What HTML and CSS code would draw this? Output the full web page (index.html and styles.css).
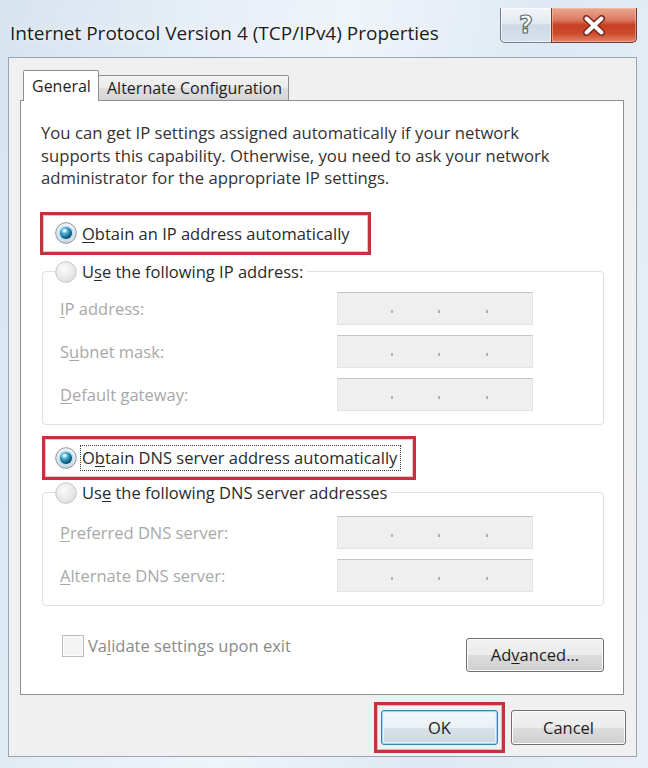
FILE: index.html
```html
<!DOCTYPE html>
<html>
<head>
<meta charset="utf-8">
<link rel="stylesheet" href="styles.css">
</head>
<body>
<div class="window">
  <div class="titlebar">
    <div class="title">Internet Protocol Version 4 (TCP/IPv4) Properties</div>
    <div class="caps">
      <div class="cap cap-help"><span class="help-glyph">?</span></div>
      <div class="cap cap-close">
        <svg width="26" height="21" viewBox="0 0 26 21">
          <path d="M5.5 3.5 L20.5 17.5 M20.5 3.5 L5.5 17.5" stroke="#7a2a1f" stroke-width="7" stroke-linecap="round" fill="none"/>
          <path d="M5.5 3.5 L20.5 17.5 M20.5 3.5 L5.5 17.5" stroke="#ffffff" stroke-width="4" stroke-linecap="round" fill="none"/>
        </svg>
      </div>
    </div>
  </div>
  <div class="client">
    <div class="tabs">
      <div class="tab active">General</div>
      <div class="tab">Alternate Configuration</div>
    </div>
    <div class="panel">
      <p class="intro">You can get IP settings assigned automatically if your network<br>supports this capability. Otherwise, you need to ask your network<br>administrator for the appropriate IP settings.</p>

      <div class="hl hl1">
        <div class="opt">
          <svg class="radio" width="22" height="22" viewBox="0 0 22 22">
            <defs>
              <linearGradient id="ring1" x1="0" y1="0" x2="0" y2="1"><stop offset="0" stop-color="#f4f7fa"/><stop offset="1" stop-color="#cfd8e1"/></linearGradient>
              <radialGradient id="dot1" cx="0.38" cy="0.32" r="0.7"><stop offset="0" stop-color="#d8f5ff"/><stop offset="0.35" stop-color="#4cb0d6"/><stop offset="0.75" stop-color="#186c92"/><stop offset="1" stop-color="#0b3d59"/></radialGradient>
            </defs>
            <circle cx="11" cy="11" r="10.3" fill="url(#ring1)" stroke="#8a97a5" stroke-width="1"/>
            <circle cx="11" cy="11" r="7.6" fill="#bde2f2"/>
            <circle cx="11" cy="11" r="6.1" fill="url(#dot1)"/>
            <ellipse cx="9.6" cy="8.4" rx="2.4" ry="1.5" fill="#ffffff" opacity="0.55"/>
          </svg>
          <span><u>O</u>btain an IP address automatically</span>
        </div>
      </div>

      <fieldset class="grp grp1">
        <legend>
          <span class="opt">
            <svg class="radio" width="22" height="22" viewBox="0 0 22 22">
              <defs><radialGradient id="off1" cx="0.4" cy="0.35" r="0.7"><stop offset="0" stop-color="#fbfbfb"/><stop offset="1" stop-color="#dedede"/></radialGradient></defs>
              <circle cx="11" cy="11" r="10.3" fill="url(#off1)" stroke="#c6c6c6" stroke-width="1"/>
            </svg>
            <span>U<u>s</u>e the following IP address:</span>
          </span>
        </legend>
        <div class="rows rows1">
          <span class="lbl"><u>I</u>P address:</span>
          <div class="ipf"><i></i><b></b><i></i><b></b><i></i><b></b><i></i></div>
          <span class="lbl">S<u>u</u>bnet mask:</span>
          <div class="ipf"><i></i><b></b><i></i><b></b><i></i><b></b><i></i></div>
          <span class="lbl"><u>D</u>efault gateway:</span>
          <div class="ipf"><i></i><b></b><i></i><b></b><i></i><b></b><i></i></div>
        </div>
      </fieldset>

      <div class="hl hl2">
        <div class="opt">
          <svg class="radio" width="22" height="22" viewBox="0 0 22 22">
            <defs>
              <linearGradient id="ring2" x1="0" y1="0" x2="0" y2="1"><stop offset="0" stop-color="#f4f7fa"/><stop offset="1" stop-color="#cfd8e1"/></linearGradient>
              <radialGradient id="dot2" cx="0.38" cy="0.32" r="0.7"><stop offset="0" stop-color="#d8f5ff"/><stop offset="0.35" stop-color="#4cb0d6"/><stop offset="0.75" stop-color="#186c92"/><stop offset="1" stop-color="#0b3d59"/></radialGradient>
            </defs>
            <circle cx="11" cy="11" r="10.3" fill="url(#ring2)" stroke="#8a97a5" stroke-width="1"/>
            <circle cx="11" cy="11" r="7.6" fill="#bde2f2"/>
            <circle cx="11" cy="11" r="6.1" fill="url(#dot2)"/>
            <ellipse cx="9.6" cy="8.4" rx="2.4" ry="1.5" fill="#ffffff" opacity="0.55"/>
          </svg>
          <span class="focus">O<u>b</u>tain DNS server address automatically</span>
        </div>
      </div>

      <fieldset class="grp grp2">
        <legend>
          <span class="opt">
            <svg class="radio" width="22" height="22" viewBox="0 0 22 22">
              <defs><radialGradient id="off2" cx="0.4" cy="0.35" r="0.7"><stop offset="0" stop-color="#fbfbfb"/><stop offset="1" stop-color="#dedede"/></radialGradient></defs>
              <circle cx="11" cy="11" r="10.3" fill="url(#off2)" stroke="#c6c6c6" stroke-width="1"/>
            </svg>
            <span>Us<u>e</u> the following DNS server addresses</span>
          </span>
        </legend>
        <div class="rows rows2">
          <span class="lbl"><u>P</u>referred DNS server:</span>
          <div class="ipf"><i></i><b></b><i></i><b></b><i></i><b></b><i></i></div>
          <span class="lbl"><u>A</u>lternate DNS server:</span>
          <div class="ipf"><i></i><b></b><i></i><b></b><i></i><b></b><i></i></div>
        </div>
      </fieldset>

      <div class="foot">
        <div class="chkrow">
          <span class="chk"></span>
          <span class="chklbl">Va<u>l</u>idate settings upon exit</span>
        </div>
        <div class="btn btn-adv">Ad<u>v</u>anced...</div>
      </div>
    </div>
    <div class="bottombar">
      <div class="hl hl-ok"><div class="btn btn-ok">OK</div></div>
      <div class="btn btn-cancel">Cancel</div>
    </div>
  </div>
</div>
</body>
</html>
```

FILE: styles.css
```css
html, body {
  margin: 0;
  padding: 0;
}
body {
  width: 648px;
  height: 768px;
  overflow: hidden;
  background: #cfdceb;
  font-family: "Open Sans", "Noto Sans", "DejaVu Sans", sans-serif;
}
u {
  text-decoration: underline;
  text-underline-offset: 2px;
  text-decoration-thickness: 1px;
}

.window {
  width: 648px;
  height: 768px;
  box-sizing: border-box;
  padding: 0 11px 11px 8px;
  display: flex;
  flex-direction: column;
  background: linear-gradient(100deg, #d7e3ef 0%, #e6eef6 25%, #eff4fa 45%, #dfe9f3 70%, #e8eff7 100%);
}

/* title bar */
.titlebar {
  height: 57px;
  flex: none;
  display: flex;
  justify-content: space-between;
  align-items: flex-start;
}
.title {
  margin-top: 21px;
  padding-left: 2px;
  font-size: 19px;
  line-height: 24px;
  color: #1c1c1c;
  white-space: nowrap;
  text-shadow: 0 0 6px rgba(255, 255, 255, 0.9);
}
.caps {
  display: flex;
  margin-top: 8px;
}
.cap {
  height: 35px;
  box-sizing: border-box;
  display: flex;
  align-items: center;
  justify-content: center;
}
.cap-help {
  width: 51px;
  border: 1px solid #707e8f;
  border-top: none;
  border-right: none;
  border-radius: 0 0 0 5px;
  background: linear-gradient(180deg, #f2f5f9 0%, #e2e9f0 45%, #cfd9e4 50%, #d9e2ec 100%);
  box-shadow: inset 0 0 0 1px rgba(255, 255, 255, 0.6);
}
.help-glyph {
  font-family: "DejaVu Sans", sans-serif;
  font-weight: bold;
  font-size: 24px;
  line-height: 24px;
  color: #ffffff;
  -webkit-text-stroke: 1.2px #5d6b7b;
}
.cap-close {
  width: 86px;
  border: 1px solid #6b3a33;
  border-top: none;
  border-radius: 0 0 5px 0;
  background: linear-gradient(180deg, #eaa792 0%, #dc7a61 35%, #c7401f 50%, #cc4b2c 75%, #e28468 100%);
  box-shadow: inset 0 0 0 1px rgba(255, 200, 180, 0.5);
}

/* client area */
.client {
  flex: 1;
  min-height: 0;
  display: flex;
  flex-direction: column;
  background: #f0f0f0;
  border: 1px solid #97a5b5;
  padding: 12px 10px 0 11px;
}

.tabs {
  display: flex;
  align-items: flex-end;
  height: 31px;
  margin: 0 0 -1px 3px;
  position: relative;
  z-index: 1;
  flex: none;
}
.tab {
  box-sizing: border-box;
  height: 26px;
  width: 190px;
  padding-left: 8px;
  font-size: 16px;
  line-height: 24px;
  color: #1e1e1e;
  white-space: nowrap;
  border: 1px solid #8c8e94;
  border-left: none;
  border-radius: 0 2px 0 0;
  background: linear-gradient(180deg, #f3f3f3 0%, #ebebeb 50%, #dedede 51%, #d6d6d6 100%);
}
.tab.active {
  width: 76px;
  height: 31px;
  padding-top: 3px;
  padding-left: 8px;
  border-left: 1px solid #8c8e94;
  border-bottom: none;
  border-radius: 2px 2px 0 0;
  background: #ffffff;
}

.panel {
  flex: 1;
  min-height: 0;
  display: flex;
  flex-direction: column;
  align-items: flex-start;
  background: #ffffff;
  border: 1px solid #8c8e94;
  margin-right: 2px;
}

.intro {
  margin: 21px 0 0 20px;
  font-size: 16.7px;
  line-height: 22.5px;
  color: #333333;
  white-space: nowrap;
}

.hl {
  box-sizing: border-box;
  border: 3px solid #c4323f;
  display: flex;
  align-items: center;
  box-shadow: inset 0 0 0 1px rgba(140, 30, 40, 0.25);
}
.hl1 {
  width: 331px;
  height: 43px;
  margin: 22px 0 0 19px;
  padding-left: 12px;
}
.hl2 {
  width: 374px;
  height: 44px;
  margin: 11px 0 0 21px;
  padding-left: 10px;
}

.opt {
  display: flex;
  align-items: center;
  gap: 5px;
  height: 22px;
  font-size: 16.5px;
  color: #2a2a2a;
  white-space: nowrap;
}
.radio {
  flex: none;
  display: block;
}
.focus {
  outline: 1px dotted #3a3a3a;
  outline-offset: 1px;
  padding-right: 2px;
  line-height: 22px;
}

.grp {
  align-self: stretch;
  margin: 6px 19px 0 21px;
  border: 1px solid #dde1e6;
  border-radius: 4px;
  padding: 0 0 13px 17px;
  min-width: 0;
}
.grp legend {
  padding: 0 4px 0 0;
  margin-left: -5px;
}
.grp2 {
  margin-top: 2px;
}

.rows {
  display: grid;
  grid-template-columns: 277px 196px;
  row-gap: 10px;
  align-items: center;
  margin-top: 9px;
}
.rows2 {
  margin-top: 12px;
}
.lbl {
  font-size: 16.5px;
  color: #a8a8a8;
  white-space: nowrap;
}
.ipf {
  height: 33px;
  box-sizing: border-box;
  background: #efefef;
  border: 1px solid #e3e3e3;
  border-top-color: #c4c4c4;
  display: flex;
  align-items: center;
  padding-left: 8px;
}
.ipf i {
  flex: 1;
}
.ipf b {
  width: 2px;
  height: 3px;
  margin: 6px 1px 0;
  background: #b0b0b0;
}

.foot {
  align-self: stretch;
  display: flex;
  justify-content: space-between;
  align-items: flex-start;
  margin: 29px 19px 0 41px;
}
.chkrow {
  display: flex;
  align-items: center;
  gap: 4px;
  height: 22px;
}
.chk {
  width: 22px;
  height: 22px;
  box-sizing: border-box;
  border: 1px solid #bdbdbd;
  background: #f4f4f4;
  box-shadow: inset 0 0 0 1px #fafafa;
}
.chklbl {
  font-size: 16.5px;
  color: #8a8a8a;
  white-space: nowrap;
}

.btn {
  box-sizing: border-box;
  display: flex;
  align-items: center;
  justify-content: center;
  font-size: 16.5px;
  color: #1e1e1e;
  border: 1px solid #707070;
  border-radius: 3px;
  background: linear-gradient(180deg, #f2f2f2 0%, #ebebeb 50%, #dddddd 51%, #cfcfcf 100%);
  box-shadow: inset 0 0 0 1px #fbfbfb;
  white-space: nowrap;
}
.btn-adv {
  width: 138px;
  height: 34px;
  margin-top: 3px;
}

.bottombar {
  height: 61px;
  flex: none;
  box-sizing: border-box;
  padding-top: 4px;
  display: flex;
  justify-content: flex-end;
  align-items: center;
  gap: 6px;
}
.hl-ok {
  padding: 5px 4px;
}
.btn-ok {
  width: 117px;
  height: 35px;
  border-color: #3c7fb1;
  background: linear-gradient(180deg, #f4f8fb 0%, #eaf0f5 50%, #d9e2ea 51%, #ccd7e0 100%);
  box-shadow: inset 0 0 0 1px #9fd6f4, inset 0 0 0 2px #e3f4fd;
}
.btn-cancel {
  width: 115px;
  height: 35px;
}
```
